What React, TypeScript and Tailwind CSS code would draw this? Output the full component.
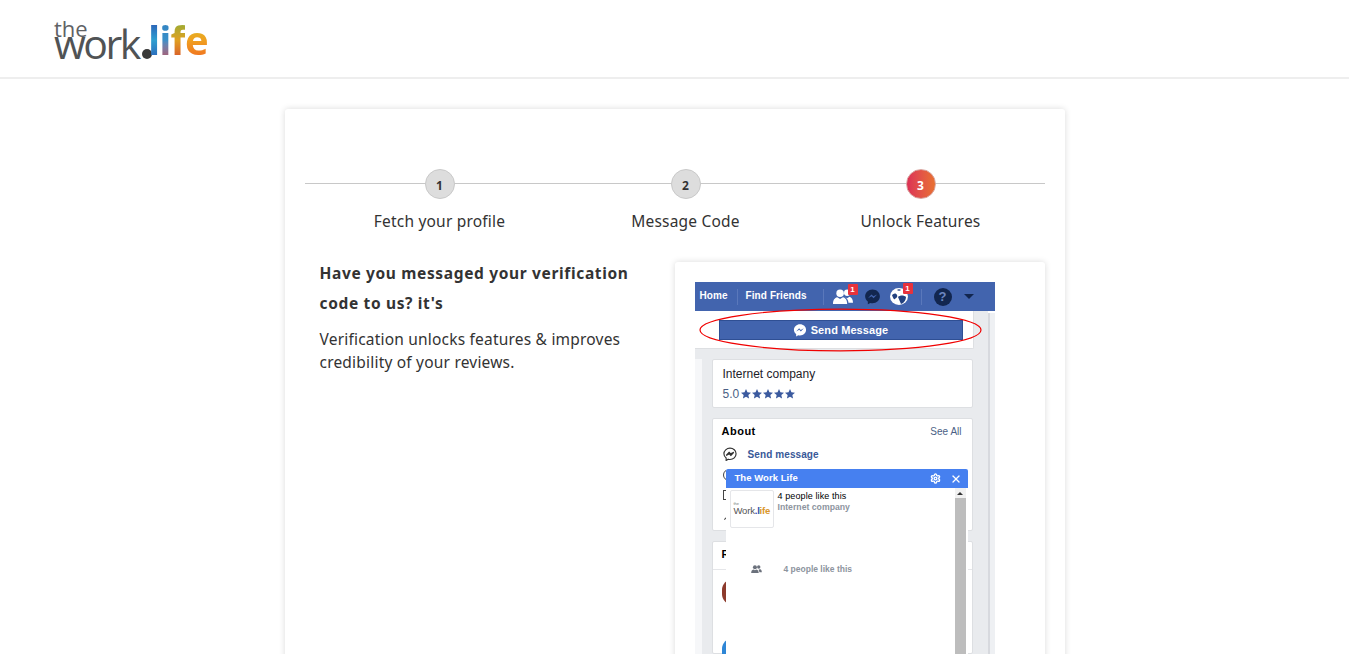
import React from 'react';
import { Settings, X } from 'lucide-react';

const Star = () => (
  <svg viewBox="0 0 24 24" className="w-[10px] h-[10px] fill-[#3b5a9f] shrink-0">
    <path d="M12 0l3.500 8 8.500.9-6.400 5.700L19.400 23 12 18.700 4.600 23l1.800-8.400L0 8.900 8.500 8z" />
  </svg>
);

// speech bubble with the messenger bolt, bolt colour is the second fill
const Messenger = ({ className, bolt }: { className: string; bolt: string }) => (
  <svg viewBox="0 0 24 24" className={className}>
    <path d="M12 2C6.200 2 1.600 6.300 1.600 11.600c0 3 1.500 5.700 3.800 7.400V23l3.600-2c1 .3 2 .4 3 .4 5.800 0 10.400-4.300 10.400-9.800S17.800 2 12 2z" />
    <path d="M5.500 14.500l5-5.500 2.800 2.800L18.500 9l-5 5.500-2.800-2.800z" className={bolt} />
  </svg>
);

const People = ({ className }: { className: string }) => (
  <svg viewBox="0 0 24 18" className={className}>
    <circle cx="8.500" cy="5" r="4.500" />
    <path d="M0 18c0-5 2-7 5-8l3.500 2 3.500-2c3 1 5 3 5 8z" />
    <circle cx="17" cy="4.500" r="3.800" />
    <path d="M14 9.500l3 1.500 2.800-1.800c2.500 1 4.200 3 4.200 7.300h-5.500c0-3-1.500-5.500-4.500-7z" />
  </svg>
);

const Globe = () => (
  <svg viewBox="0 0 18 17" className="w-[18px] h-[17px]">
    <ellipse cx="9" cy="8.500" rx="9" ry="8.500" fill="#ffffff" />
    <path d="M2 7c2-2 4-2 5 0s-1 3-2 4-2-1-3-4zM8 9c2-2 6-2 8 0 0 3-2 6-5 7-1-2-2-5-3-7zM7 2c1-1 3-1 4 0-1 1-3 1-4 0z" fill="#23417f" />
  </svg>
);

const Badge = () => (
  <span className="absolute -top-[5px] -right-[5px] w-[10px] h-[11px] bg-[#e8323c] rounded-[1px] text-white text-[8px] font-bold leading-[11px] text-center">
    1
  </span>
);

const steps = [
  { n: 1, label: 'Fetch your profile', x: 'w-[270px]' },
  { n: 2, label: 'Message Code', x: 'w-[222px]' },
  { n: 3, label: 'Unlock Features', x: 'w-[248px]' },
];

function FacebookShot() {
  return (
    <div className="w-[300px] h-[372px] overflow-hidden relative font-['Liberation_Sans',sans-serif]">
      {/* nav bar */}
      <div className="h-[29px] bg-[#4264ae] flex items-center text-white text-[10px] font-bold tracking-[0.1px]">
        <span className="ml-[5px] w-[29px] -mt-[3px]">Home</span>
        <span className="ml-[8px] h-[16px] w-px bg-[#5a78bb]" />
        <span className="ml-[8px] w-[62px] whitespace-nowrap -mt-[3px]">Find Friends</span>
        <span className="ml-[15px] h-[16px] w-px bg-[#5a78bb]" />
        <div className="relative ml-[9px] w-[20px] h-[15px]">
          <People className="w-[20px] h-[15px] fill-white" />
          <Badge />
        </div>
        <Messenger className="ml-[11px] w-[17px] h-[17px] fill-[#12264f]" bolt="fill-[#4264ae]" />
        <div className="relative ml-[9px] w-[18px] h-[17px]">
          <Globe />
          <Badge />
        </div>
        <span className="ml-[13px] h-[16px] w-px bg-[#5a78bb]" />
        <span className="ml-[12px] w-[18px] h-[18px] rounded-full bg-[#12264f] text-[#6c86c0] text-[13px] leading-[18px] text-center">?</span>
        <span className="ml-[12px] w-0 h-0 border-x-[5px] border-x-transparent border-t-[5px] border-t-[#12264f]" />
      </div>

      <div className="flex">
        <div className="w-[293px]">
          {/* send message strip */}
          <div className="flex h-[38px] bg-[#e9ebee]">
            <div className="w-[279px] bg-white rounded-br-[2px] border-r border-b border-[#dddfe2] pl-[24px] pt-[9px]">
              <div className="w-[244px] h-[20px] bg-[#4264ae] border border-[#2f4f94] flex items-center justify-center gap-[4px] text-white text-[11px] font-bold tracking-[0.1px]">
                <Messenger className="w-[14px] h-[14px] fill-white" bolt="fill-[#4264ae]" />
                Send Message
              </div>
            </div>
          </div>

          {/* page column */}
          <div className="bg-[#e9ebee] h-[305px] flex">
            <div className="w-[7px] mt-[10px] bg-[#f6f7f9]" />
            <div className="w-[261px] ml-[10px] pt-[10px] flex flex-col gap-[10px]">
              <div className="h-[49px] bg-white rounded-[2px] border border-[#dddfe2] px-[10px] pt-[7px] text-[12px] leading-[14px] text-[#1d2129]">
                <div>Internet company</div>
                <div className="mt-[6px] flex items-center gap-px text-[#4b5f85]">
                  <span className="mr-px">5.0</span>
                  <Star /><Star /><Star /><Star /><Star />
                </div>
              </div>
              <div className="h-[113px] bg-white rounded-[2px] border border-[#dddfe2] px-[10px] pt-[4px] text-[#1d2129] relative">
                <div className="flex justify-between items-center">
                  <span className="text-[11px] font-bold text-black tracking-[0.5px] -ml-px">About</span>
                  <span className="text-[10px] text-[#4b5f85]">See All</span>
                </div>
                <div className="mt-[7px] flex items-center gap-[11px]">
                  <Messenger className="w-[14px] h-[14px] fill-white stroke-[#333] stroke-2" bolt="fill-[#333]" />
                  <span className="text-[10px] font-bold text-[#385898] tracking-[0.1px]">Send message</span>
                </div>
                {/* row icons that stick out left of the chat popup */}
                <span className="absolute left-[10px] top-[50px] w-[12px] h-[12px] rounded-full border border-[#444]" />
                <span className="absolute left-[10px] top-[71px] w-[9px] h-[10px] border border-[#444]" />
                <span className="absolute left-[10px] top-[97px] w-[9px] h-px bg-[#444] -rotate-45" />
              </div>
              <div className="flex-1 bg-white border border-[#dddfe2] rounded-[2px] relative">
                <span className="absolute left-[9px] top-[4px] text-[11px] font-bold text-black">R</span>
                <div className="absolute left-0 right-0 top-[27px] h-px bg-[#e5e6e9]" />
                <span className="absolute left-[9px] top-[37px] w-[22px] h-[26px] rounded-full bg-[#8c3a2c]" />
                <span className="absolute left-[9px] top-[96px] w-[22px] h-[26px] rounded-full bg-[#2e86d6]" />
              </div>
            </div>
          </div>
        </div>
        {/* scroll gutter inside the screenshot */}
        <div className="w-[7px] mt-[2px] bg-[#eef0f3] border-l-2 border-[#d7d9de]" />
      </div>

      {/* chat popup over the page */}
      <div className="absolute left-[31px] top-[187px] w-[242px] h-[185px] bg-white">
        <div className="h-[19px] bg-[#4680f0] rounded-t-[2px] flex items-center pl-[9px] pr-[6px] text-white text-[9.500px] font-bold tracking-[0.05px]">
          <span className="flex-1">The Work Life</span>
          <Settings size={11} strokeWidth={3} className="mr-[9px]" />
          <X size={12} strokeWidth={2.500} />
        </div>
        <div className="flex h-[166px]">
          <div className="flex-1 relative pl-[4px] pt-[2px]">
            <div className="flex gap-[4px]">
              <div className="w-[44px] h-[38px] rounded-[2px] border border-[#e5e6e9] flex flex-col items-start justify-center pl-[3px]">
                <span className="text-[4px] leading-[4px] text-[#777]">the</span>
                <span className="text-[9.500px] text-[#555] leading-[10px] tracking-[-0.2px] whitespace-nowrap">Work<span className="font-bold text-[#2d50b0]">.l</span><span className="font-bold text-[#d9962b]">ife</span></span>
              </div>
              <div className="text-[9px] leading-[11px] pt-px">
                <div className="text-black tracking-[0.1px]">4 people like this</div>
                <div className="text-[8.700px] font-bold text-[#8d949e]">Internet company</div>
              </div>
            </div>
            <div className="flex items-center pl-[21px] mt-[35px] text-[8.500px] font-bold text-[#8d949e]">
              <People className="w-[11px] h-[8px] fill-[#6b717c] mr-[22px]" />
              4 people like this
            </div>
          </div>
          <div className="w-[11px] mr-[2px] flex flex-col">
            <div className="h-[10px] bg-[#f1f1f1] flex items-center justify-center">
              <span className="w-0 h-0 border-x-[3px] border-x-transparent border-b-[3px] border-b-[#333]" />
            </div>
            <div className="flex-1 bg-[#bdbdbd]" />
          </div>
        </div>
      </div>

      {/* red circle drawn on the screenshot */}
      <svg className="absolute left-0 top-0 w-[300px] h-[80px]" viewBox="0 0 300 80" fill="none">
        <ellipse cx="145.500" cy="48" rx="140.500" ry="20.800" stroke="#f00000" strokeWidth="1.200" />
      </svg>
    </div>
  );
}

export default function App() {
  return (
    <div className="h-[654px] overflow-hidden bg-white font-['Noto_Sans',sans-serif] text-[#333]">
      <div className="w-[1349px]">
        <header className="h-[79px] border-b-2 border-[#eeeeee] pl-[54px] pt-[17px]">
          <div className="relative w-[155px] h-[46px] font-['Open_Sans',sans-serif]">
            <span className="absolute left-0 top-[-1px] text-[22px] leading-[24px] text-[#5f6265]">the</span>
            <span className="absolute left-0 top-[1px] text-[41px] leading-[50px] tracking-[-2.500px] font-medium text-[#505355]">work</span>
            <span className="absolute left-[88px] top-[32px] w-[10px] h-[10px] rounded-full bg-[#3a3a3a]" />
            <span className="absolute left-[94px] top-[-2px] flex text-[40px] leading-[50px] font-bold tracking-[-1px]">
              <span className="bg-linear-to-b from-[#2a3fa8] via-[#2f9fd0] to-[#2b4fb0] bg-clip-text text-transparent">l</span>
              <span className="bg-linear-to-b from-[#2f7fc0] via-[#3a8fc8] to-[#c0304a] bg-clip-text text-transparent">i</span>
              <span className="bg-linear-to-b from-[#6aae3a] via-[#e0a020] to-[#d0302a] bg-clip-text text-transparent">f</span>
              <span className="bg-linear-to-b from-[#c8c828] via-[#f0a020] to-[#ee5a20] bg-clip-text text-transparent">e</span>
            </span>
          </div>
        </header>

        <main className="w-[780px] h-[600px] mx-auto mt-[30px] bg-white rounded-[3px] shadow-[0_0_6px_rgba(0,0,0,0.15)] px-[20px] pt-[60px]">
          <div className="relative flex">
            <div className="absolute left-0 right-0 top-[14px] h-px bg-[#c8c8c8]" />
            {steps.map((s) => (
              <div key={s.n} className={`${s.x} relative flex flex-col items-center`}>
                <span
                  className={
                    s.n === 3
                      ? 'w-[30px] h-[30px] pt-[3px] rounded-full border border-[#d9a5a0] bg-linear-to-r from-[#dc2f55] to-[#e8702f] text-white text-[12px] font-bold flex items-center justify-center'
                      : 'w-[30px] h-[30px] pt-[3px] rounded-full border border-[#c9c9c9] bg-[#dddddd] text-[#333] text-[12px] font-bold flex items-center justify-center'
                  }
                >
                  {s.n}
                </span>
                <span className="mt-[12px] text-[15.500px] leading-[20px] text-[#333] tracking-[0.2px]">{s.label}</span>
              </div>
            ))}
          </div>

          <div className="flex mt-[31px]">
            <div className="w-[370px] pl-[15px] -mt-[4px]">
              <h2 className="text-[15.500px] font-bold leading-[30px] text-[#333] w-[320px] tracking-[0.65px]">
                Have you messaged your verification code to us? it's
              </h2>
              <p className="mt-[10px] text-[15.500px] leading-[23px] text-[#333] w-[320px] tracking-[0.2px]">
                Verification unlocks features &amp; improves credibility of your reviews.
              </p>
            </div>
            <div className="w-[370px] h-[420px] bg-white rounded-[3px] shadow-[0_0_6px_rgba(0,0,0,0.15)] pl-[20px] pt-[20px]">
              <FacebookShot />
            </div>
          </div>
        </main>
      </div>
    </div>
  );
}
